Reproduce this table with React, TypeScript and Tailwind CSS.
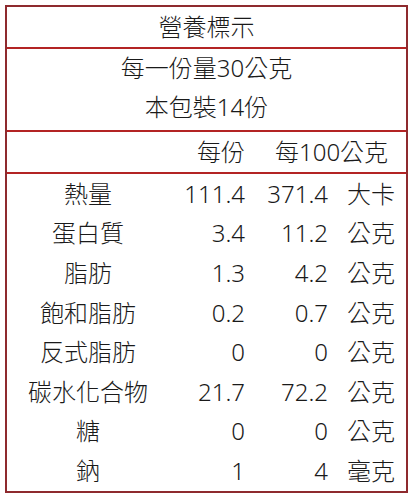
const rows: [string, string, string, string][] = [
  ["熱量", "111.4", "371.4", "大卡"],
  ["蛋白質", "3.4", "11.2", "公克"],
  ["脂肪", "1.3", "4.2", "公克"],
  ["飽和脂肪", "0.2", "0.7", "公克"],
  ["反式脂肪", "0", "0", "公克"],
  ["碳水化合物", "21.7", "72.2", "公克"],
  ["糖", "0", "0", "公克"],
  ["鈉", "1", "4", "毫克"],
];

export default function App() {
  return (
    <div className="min-h-[498px] bg-white pl-[5px] pt-[5px]">
      <div className="flex h-[488px] w-[403px] flex-col border-2 border-[#8e2a2e] font-['Noto_Sans','Noto_Sans_CJK_TC',sans-serif] text-[24px] font-light leading-none text-[#1a1a1a]">
        <div className="flex h-[42px] shrink-0 items-center justify-center border-b-2 border-[#b32424]">營養標示</div>

        <div className="flex h-[83px] shrink-0 flex-col border-b-2 border-[#b32424]">
          <div className="flex h-[38px] items-center justify-center">每一份量30公克</div>
          <div className="flex h-[40px] items-center justify-center">本包裝14份</div>
        </div>

        <div className="grid h-[42px] shrink-0 grid-cols-[162px_76px_1fr] items-center border-b-2 border-[#b32424]">
          <div />
          <div className="text-right">每份</div>
          <div className="pl-[30px]">每100公克</div>
        </div>

        <div className="flex flex-1 flex-col">
          {rows.map(([name, serving, per100, unit]) => (
            <div key={name} className="grid h-[39.6px] grid-cols-[162px_76px_83px_1fr] items-center">
              <div className="text-center">{name}</div>
              <div className="text-right">{serving}</div>
              <div className="text-right">{per100}</div>
              <div className="pl-[19px]">{unit}</div>
            </div>
          ))}
        </div>
      </div>
    </div>
  );
}
